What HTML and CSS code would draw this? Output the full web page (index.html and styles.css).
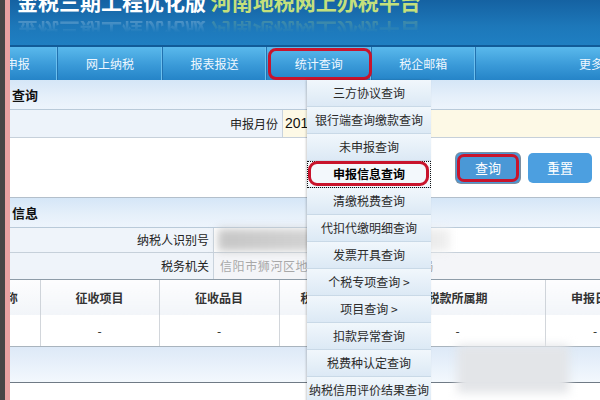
FILE: index.html
```html
<!DOCTYPE html>
<html lang="zh-CN">
<head>
    <meta charset="UTF-8">
    <title>河南地税网上办税平台</title>
    <link rel="stylesheet" href="styles.css">
</head>
<body>
    <div class="site">
        <div class="banner">
            <div class="title"><span class="title-main">金税三期工程优化版</span> <span class="title-sub">河南地税网上办税平台</span></div>
            <div class="title reflect" aria-hidden="true"><span class="title-main">金税三期工程优化版</span> <span class="title-sub">河南地税网上办税平台</span></div>
        </div>

        <div class="nav">
            <div class="nav-item">网上申报</div>
            <div class="nav-item">网上纳税</div>
            <div class="nav-item">报表报送</div>
            <div class="nav-item marked">统计查询</div>
            <div class="nav-item">税企邮箱</div>
            <div class="nav-item more">更多服务</div>
        </div>

        <div class="section-head">查询</div>
        <div class="form-row">
            <div class="label label-wide">申报月份</div>
            <div class="value value-input">2019-05</div>
        </div>
        <div class="actions">
            <button class="btn marked">查询</button>
            <button class="btn">重置</button>
        </div>

        <div class="section-head">信息</div>
        <div class="form-row info-row">
            <div class="label">纳税人识别号</div>
            <div class="value"><span class="blur-box"></span></div>
        </div>
        <div class="form-row info-row last">
            <div class="label">税务机关</div>
            <div class="value value-muted">信阳市狮河区地方税务局第一税务分局</div>
        </div>

        <table class="grid">
            <colgroup>
                <col style="width:68px">
                <col style="width:119px">
                <col style="width:120px">
                <col style="width:91px">
                <col style="width:175px">
                <col style="width:100px">
            </colgroup>
            <thead>
                <tr>
                    <th>名称</th>
                    <th>征收项目</th>
                    <th>征收品目</th>
                    <th>税款金额</th>
                    <th>税款所属期</th>
                    <th>申报日期</th>
                </tr>
            </thead>
            <tbody>
                <tr>
                    <td></td>
                    <td>-</td>
                    <td>-</td>
                    <td>-</td>
                    <td>-</td>
                    <td>-</td>
                </tr>
            </tbody>
        </table>
        <div class="band"></div>

        <div class="blur-patch"></div>

        <ul class="menu">
            <li>三方协议查询</li>
            <li>银行端查询缴款查询</li>
            <li>未申报查询</li>
            <li class="active">申报信息查询</li>
            <li>清缴税费查询</li>
            <li>代扣代缴明细查询</li>
            <li>发票开具查询</li>
            <li>个税专项查询 &gt;</li>
            <li>项目查询 &gt;</li>
            <li>扣款异常查询</li>
            <li>税费种认定查询</li>
            <li>纳税信用评价结果查询</li>
        </ul>
    </div>
</body>
</html>
```

FILE: styles.css
```css
body {
    margin: 0;
    border-left: 5px solid #464646;
    background: #fff;
    font-family: "Noto Sans CJK SC", "Liberation Sans", sans-serif;
    font-size: 12px;
    color: #222;
}
.site {
    position: relative;
    height: 400px;
    overflow: hidden;
    border-left: 5px solid #e8a2a2;
}

/* banner */
.banner {
    height: 45px;
    overflow: hidden;
    background: linear-gradient(#1562a2, #1d78ba 60%, #1f7fc2);
}
.title {
    padding-left: 7px;
    margin-top: -9px;
    height: 21px;
    line-height: 21px;
    font-size: 21px;
    font-weight: bold;
    white-space: nowrap;
}
.title-main {
    color: #fff;
}
.title-sub {
    color: #c4e07c;
}
.reflect {
    margin-top: 9px;
    transform: scaleY(-1);
    opacity: 0.22;
    -webkit-mask-image: linear-gradient(to bottom, transparent 45%, #000);
    mask-image: linear-gradient(to bottom, transparent 45%, #000);
}

/* nav */
.nav {
    display: flex;
    height: 33px;
    margin-left: -56px;
    border-top: 2px solid #115b98;
    background: linear-gradient(#5ab9ec, #3a9ad8 55%, #2584c8);
}
.nav-item {
    position: relative;
    flex: 0 0 104.4px;
    box-sizing: border-box;
    border-right: 1px solid #2272b0;
    box-shadow: inset -1px 0 0 #6cc0ee;
    text-align: center;
    line-height: 33px;
    color: #eef7ff;
    white-space: nowrap;
}
.nav-item.more {
    flex-basis: 220px;
    padding-left: 103px;
    text-align: left;
}
.nav-item.marked::after {
    content: "";
    position: absolute;
    top: 1px;
    bottom: 0;
    left: 1px;
    right: -1px;
    border: 3px solid #c8142c;
    border-radius: 8px;
}

/* query form */
.section-head {
    height: 29px;
    line-height: 29px;
    padding-left: 2px;
    border-bottom: 1px solid #b9cad9;
    background: linear-gradient(#d5e6f7, #e6f0fa 60%, #edf4fc);
    font-size: 13px;
    font-weight: bold;
    color: #111;
}
.form-row {
    display: flex;
    height: 27px;
    border-bottom: 1px solid #c6d0da;
    line-height: 27px;
}
.label {
    flex: 0 0 204px;
    box-sizing: border-box;
    padding-right: 4px;
    text-align: right;
    background: #edf3fa;
    border-right: 1px solid #c9d3dd;
    color: #222;
}
.label-wide {
    flex-basis: 273px;
}
.value {
    flex: 1;
    display: flex;
    align-items: center;
    padding-left: 4px;
}
.value-input {
    padding-left: 2px;
    background: #fdf9e6;
    font-family: "Liberation Sans", sans-serif;
    font-size: 14px;
    color: #111;
}
.info-row {
    height: 24px;
    line-height: 24px;
}
.info-row .label {
    background: #eff4fa;
}
.info-row.last {
    height: 26px;
    line-height: 26px;
    border-bottom-color: #8e9ca8;
}
.info-row.last .value {
    background: #f4f5f8;
}
.value-muted {
    padding-left: 6px;
    color: #a8a8a8;
    letter-spacing: 0.6px;
    white-space: nowrap;
}
.blur-box {
    width: 232px;
    height: 22px;
    background: linear-gradient(90deg, #c6c6c6, #d8d8d8 60%, #f0f0f0);
    filter: blur(4px);
}

.actions {
    display: flex;
    justify-content: flex-end;
    align-items: center;
    gap: 8px;
    height: 59px;
    padding-right: 8px;
    border-bottom: 1px solid #b3bfcb;
}
.btn {
    position: relative;
    width: 64px;
    height: 30px;
    border: none;
    border-radius: 5px;
    background: #4c9fe0;
    color: #fff;
    font-family: inherit;
    font-size: 13px;
}
.btn.marked {
    background: #4a98d6;
    box-shadow: 0 0 0 1px #7b8ea0;
}
.btn.marked::after {
    content: "";
    position: absolute;
    inset: 1px;
    border: 3px solid #c8142c;
    border-radius: 7px;
}

/* result table */
.grid {
    table-layout: fixed;
    border-collapse: collapse;
    width: 673px;
    margin-left: -38px;
}
.grid th {
    height: 35px;
    padding: 0;
    border-right: 1px solid #cfd4da;
    background: linear-gradient(#fdfdfe, #f2f5f9);
    font-weight: bold;
    color: #333;
    white-space: nowrap;
}
.grid td {
    height: 31px;
    padding: 0;
    border-right: 1px solid #d2d6db;
    border-bottom: 1px solid #a9b4be;
    text-align: center;
}
.band {
    height: 35px;
    border-bottom: 1px solid #6f7a85;
    background: linear-gradient(#dde9f7, #eaf2fb 60%, #f3f8fd);
}
.blur-patch {
    position: absolute;
    left: 447px;
    top: 345px;
    width: 112px;
    height: 48px;
    background: #e3e5e8;
    filter: blur(5px);
}

/* dropdown */
.menu {
    position: absolute;
    top: 80px;
    left: 297px;
    width: 124px;
    margin: 0;
    padding: 0;
    list-style: none;
    box-shadow: -1px 0 2px rgba(0, 0, 0, 0.2);
}
.menu li {
    position: relative;
    height: 27px;
    box-sizing: border-box;
    border-bottom: 1px solid #c9d9e7;
    background: linear-gradient(#f1f7fc, #dce9f5);
    line-height: 26px;
    text-align: center;
    color: #2a2a2a;
    white-space: nowrap;
}
.menu li.active {
    background: #f3f8fc;
    outline: 1px dotted #111;
    outline-offset: -1px;
    color: #000;
    font-weight: bold;
}
.menu li.active::after {
    content: "";
    position: absolute;
    top: 0;
    bottom: 1px;
    left: 1px;
    right: 2px;
    border: 3px solid #c8142c;
    border-radius: 9px;
}
```
